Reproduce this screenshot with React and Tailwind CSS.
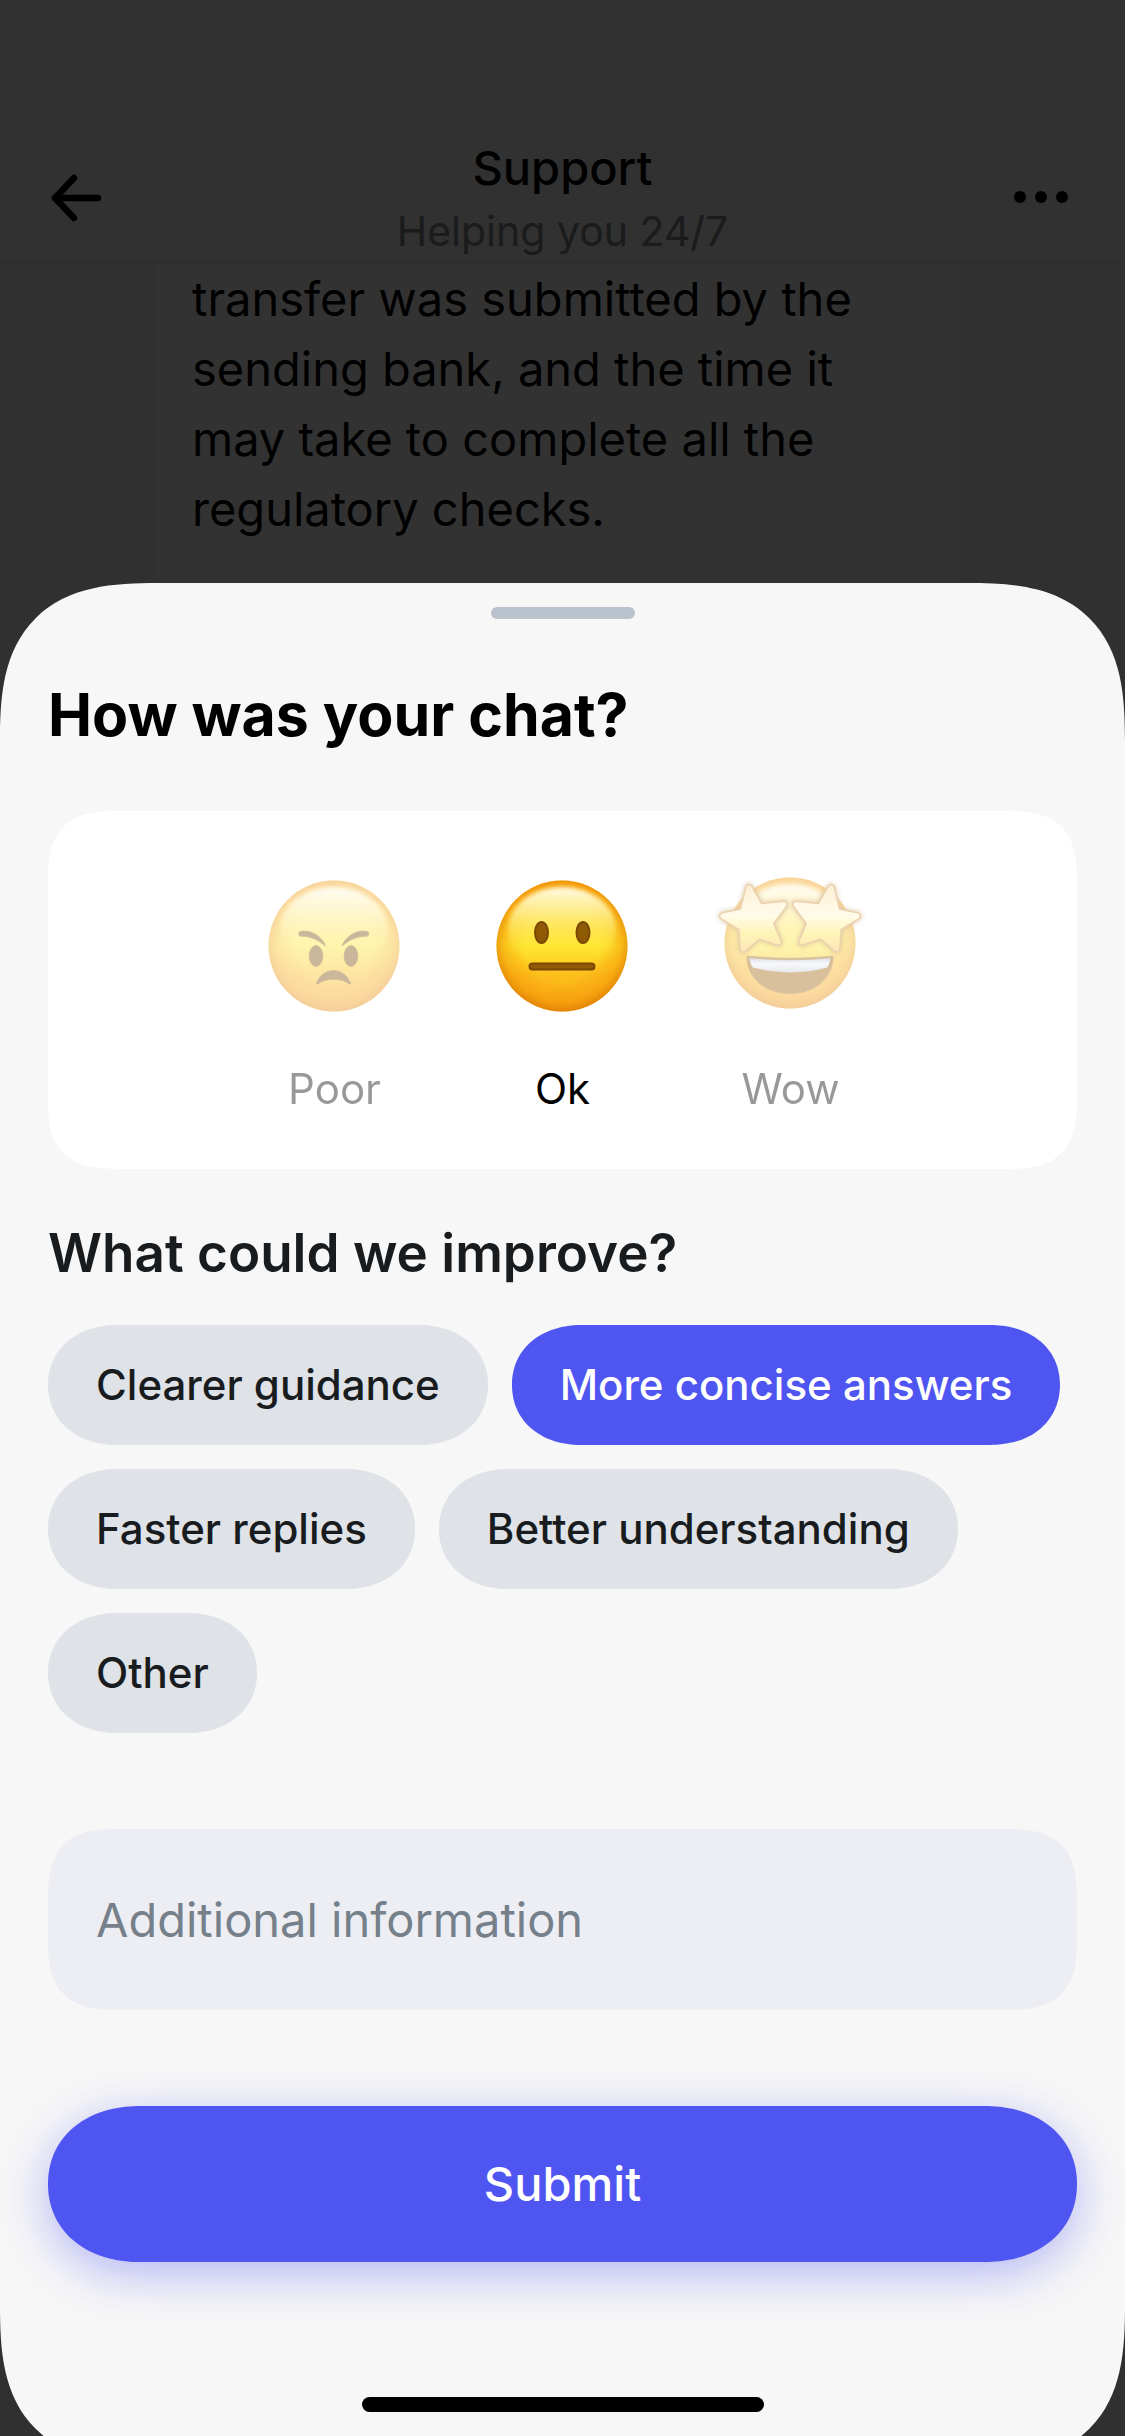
import { useState } from "react";

function FaceDefs({ id }) {
  return (
    <defs>
      <linearGradient id={`${id}-base`} x1="0" y1="0" x2="0" y2="1">
        <stop offset="0" stopColor="#fdae10" />
        <stop offset="0.18" stopColor="#ffc421" />
        <stop offset="0.5" stopColor="#ffe22b" />
        <stop offset="0.72" stopColor="#fdbf1c" />
        <stop offset="1" stopColor="#f9a816" />
      </linearGradient>
      <radialGradient id={`${id}-edge`} cx="0.5" cy="0.48" r="0.52">
        <stop offset="0.55" stopColor="#f08a00" stopOpacity="0" />
        <stop offset="0.85" stopColor="#f08a00" stopOpacity="0.38" />
        <stop offset="1" stopColor="#d97400" stopOpacity="0.7" />
      </radialGradient>
      <linearGradient id={`${id}-shine`} x1="0" y1="0" x2="0" y2="1">
        <stop offset="0" stopColor="#fffbe6" />
        <stop offset="0.3" stopColor="#fff59e" stopOpacity="0.8" />
        <stop offset="0.75" stopColor="#ffee3c" stopOpacity="0.25" />
        <stop offset="1" stopColor="#ffe52c" stopOpacity="0" />
      </linearGradient>
      <linearGradient id={`${id}-star`} x1="0" y1="0" x2="0" y2="1">
        <stop offset="0" stopColor="#ffdca0" />
        <stop offset="0.45" stopColor="#fff8cc" />
        <stop offset="0.75" stopColor="#ffe64c" />
        <stop offset="1" stopColor="#fcc850" />
      </linearGradient>
      <linearGradient id={`${id}-teeth`} x1="0" y1="0" x2="0" y2="1">
        <stop offset="0" stopColor="#a9aebb" />
        <stop offset="0.4" stopColor="#eef1f6" />
        <stop offset="1" stopColor="#c3c8d4" />
      </linearGradient>
      <filter id={`${id}-soft`} x="-20%" y="-20%" width="140%" height="140%">
        <feGaussianBlur stdDeviation="2" />
      </filter>
    </defs>
  );
}

function Head({ id, cy = 76 }) {
  return (
    <g>
      <circle cx="80" cy={cy} r="65.5" fill={`url(#${id}-base)`} />
      <circle cx="80" cy={cy} r="65.5" fill={`url(#${id}-edge)`} />
      <ellipse cx="80" cy={cy - 16} rx="54" ry="43" fill={`url(#${id}-shine)`} filter={`url(#${id}-soft)`} />
    </g>
  );
}

function PoorFace() {
  return (
    <svg viewBox="1 0 160 152" className="h-[152px] w-[160px]" aria-hidden="true">
      <FaceDefs id="poor" />
      <Head id="poor" />
      <g fill="#7d4a05" stroke="#9a6208" strokeWidth="1">
        <ellipse cx="62" cy="86" rx="6.8" ry="10.5" />
        <ellipse cx="97" cy="86" rx="6.8" ry="10.5" />
        <path d="M45 65c-1-2 0-3.500 3-3.800 11-1 20.500 6.500 23.500 14.800-7-6-14-9.500-23.500-9.800-1.600 0-2.500-.3-3-1.200z" />
        <path d="M114.500 65c1-2 0-3.500-3-3.800-11-1-20.500 6.500-23.500 14.800 7-6 14-9.500 23.500-9.800 1.600 0 2.500-.3 3-1.200z" />
        <path d="M62.500 113c3-7.500 9.500-12.500 17-12.500s14 5 17 12.500c.4 1-.4 1.500-1.200 1-5-3.500-10-4.800-15.800-4.800s-10.800 1.300-15.800 4.800c-.8.5-1.600 0-1.200-1z" />
      </g>
    </svg>
  );
}

function OkFace() {
  return (
    <svg viewBox="1 0 160 152" className="h-[152px] w-[160px]" aria-hidden="true">
      <FaceDefs id="ok" />
      <Head id="ok" />
      <g fill="#8f5a04" stroke="#7a4802" strokeWidth="2">
        <ellipse cx="59.500" cy="62.500" rx="6.500" ry="10.500" />
        <ellipse cx="101" cy="62.500" rx="6.500" ry="10.500" />
        <rect x="47.500" y="93.500" width="65" height="6" rx="3" />
      </g>
    </svg>
  );
}

const STAR = "39,18 50,37 74,34.5 60,53 68,72 48.500,65.500 33.500,78.500 32,57.500 13,46 33,42";

function Star({ transform }) {
  return (
    <g transform={transform} strokeLinejoin="round">
      <polygon points={STAR} fill="#a0640c" stroke="#a0640c" strokeWidth="10" opacity="0.7" filter="url(#wow-soft)" />
      <polygon points={STAR} fill="#d08e3a" stroke="#d08e3a" strokeWidth="8" />
      <polygon points={STAR} fill="url(#wow-star)" stroke="url(#wow-star)" strokeWidth="5" />
    </g>
  );
}

function WowFace() {
  return (
    <svg viewBox="1 0 160 152" className="h-[152px] w-[160px]" aria-hidden="true">
      <FaceDefs id="wow" />
      <Head id="wow" cy={73} />
      <path d="M37 86c28 3 58 3 86 0 .8 20-17 37.500-43 37.500s-43.800-17.500-43-37.500z" fill="#a2630c" stroke="#a86c14" strokeWidth="1" />
      <path d="M39.500 88c27 3 54 3 81 0-.5 4-1.500 7-3.500 9.500-24 6.500-50 6.500-74 0-2-2.500-3-5.500-3.500-9.500z" fill="url(#wow-teeth)" />
      <Star />
      <Star transform="matrix(-1 0 0 1 160 0)" />
    </svg>
  );
}

const ratings = [
  { name: "Poor", Face: PoorFace },
  { name: "Ok", Face: OkFace },
  { name: "Wow", Face: WowFace },
];

const improvements = [
  "Clearer guidance",
  "More concise answers",
  "Faster replies",
  "Better understanding",
  "Other",
];

function Header() {
  return (
    <header className="flex h-[264px] items-end justify-between border-b-2 border-[#2e2e2e] bg-[#313131] px-12">
      <button type="button" aria-label="Back" className="mb-10 text-black">
        <svg viewBox="0 0 64 48" className="h-12 w-16" fill="none" stroke="currentColor" strokeWidth="6.5" strokeLinecap="round" strokeLinejoin="round" aria-hidden="true">
          <path d="M50 24H7M26 4 7 24l19 20" />
        </svg>
      </button>
      <div className="text-center">
        <h1 className="text-[47px] leading-[64px] font-medium text-black">Support</h1>
        <p className="text-[41px] leading-[62px] text-[#191b1c]">Helping you 24/7</p>
      </div>
      <button type="button" aria-label="More options" className="mb-10 text-black">
        <svg viewBox="0 0 64 48" className="h-12 w-16" fill="currentColor" aria-hidden="true">
          <circle cx="7" cy="23" r="6" />
          <circle cx="28" cy="23" r="6" />
          <circle cx="49" cy="23" r="6" />
        </svg>
      </button>
    </header>
  );
}

export default function App() {
  const [rating, setRating] = useState("Ok");
  const [picked, setPicked] = useState(["More concise answers"]);
  const toggle = (name) =>
    setPicked((now) => (now.includes(name) ? now.filter((n) => n !== name) : [...now, name]));

  return (
    <div className="flex min-h-screen flex-col overflow-hidden bg-[#303030] font-['Inter',sans-serif]">
      <Header />
      <div className="mr-[166px] ml-[158px] bg-[#323232] pr-9 pb-[39px] pl-[34px]">
        <p className="text-[47px] leading-[70px] text-black">
          transfer was submitted by the
          <br />
          sending bank, and the time it
          <br />
          may take to complete all the
          <br />
          regulatory checks.
        </p>
      </div>

      <section
        aria-labelledby="sheet-title"
        className="-mb-7 flex flex-1 flex-col rounded-[158px] bg-[#f7f7f7] px-12 pb-[52px] [corner-shape:superellipse(1.45)]"
      >
        <div className="mx-auto mt-6 h-3 w-36 shrink-0 rounded-full bg-[#bac3cd]" />
        <h2 id="sheet-title" className="mt-[60px] text-[59px] leading-[72px] font-bold text-black">
          How was your chat?
        </h2>

        <fieldset
          aria-label="Rate your chat"
          className="mt-[60px] flex justify-center gap-[68px] rounded-[72px] bg-white pt-[59px] pb-[51px] [corner-shape:superellipse(1.5)]"
        >
          {ratings.map(({ name, Face }) => (
            <label
              key={name}
              className={`relative flex w-[160px] cursor-pointer flex-col items-center ${rating === name ? "" : "opacity-40"}`}
            >
              <input
                type="radio"
                name="rating"
                value={name}
                checked={rating === name}
                onChange={() => setRating(name)}
                className="sr-only"
              />
              <Face />
              <span className="mt-[38px] text-[42px] leading-[58px] text-black">{name}</span>
            </label>
          ))}
        </fieldset>

        <h3 className="mt-[50px] text-[53px] leading-[68px] font-semibold text-[#191c1f]">
          What could we improve?
        </h3>
        <div className="mt-[38px] flex flex-wrap gap-6">
          {improvements.map((name) => (
            <button
              key={name}
              type="button"
              aria-pressed={picked.includes(name)}
              onClick={() => toggle(name)}
              className={`h-[120px] rounded-[70px/60px] px-12 text-[42px] leading-[60px] font-medium [corner-shape:superellipse(1.1)] ${
                picked.includes(name) ? "bg-[#4f55f1] text-white" : "bg-[#dfe2e7] text-[#191c1f]"
              }`}
            >
              {name}
            </button>
          ))}
        </div>

        <input
          type="text"
          aria-label="Additional information"
          placeholder="Additional information"
          className="mt-24 h-[181px] w-full rounded-[72px] bg-[#edeef3] px-12 text-[47px] text-[#191c1f] placeholder:text-[#75808a] [corner-shape:superellipse(1.5)]"
        />
        <button
          type="button"
          className="mt-24 h-[156px] w-full rounded-[92px/78px] bg-[#4f55f1] text-[47px] font-medium text-white shadow-[0_12px_48px_rgba(79,85,241,0.4)] [corner-shape:superellipse(1.1)]"
        >
          Submit
        </button>
        <div className="mx-auto mt-[135px] h-[15px] w-[402px] rounded-full bg-black" />
      </section>
    </div>
  );
}
